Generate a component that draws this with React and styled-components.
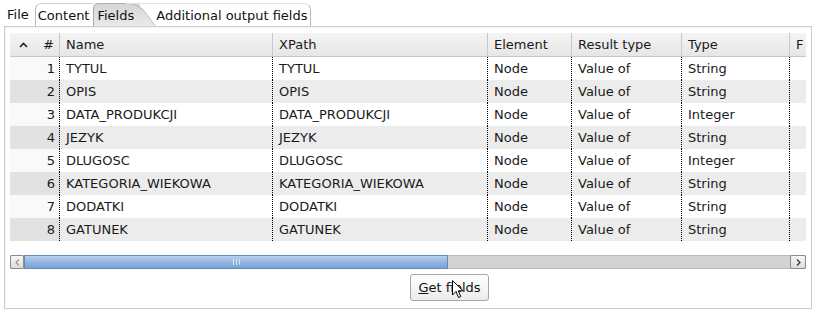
import styled, { createGlobalStyle, css } from "styled-components";

const GlobalStyle = createGlobalStyle`
  body {
    margin: 0;
    background: #ffffff;
    font-family: "DejaVu Sans", "Noto Sans", sans-serif;
    font-size: 13px;
    color: #1a1a1a;
  }
`;

const Window = styled.div`
  width: 816px;
  height: 315px;
  background: #ffffff;
  overflow: hidden;
`;

const TabBar = styled.div`
  display: flex;
  align-items: flex-end;
  height: 26px;
  padding-left: 4px;
`;

const tabVariants = {
  plain: css`
    padding: 0 6px 0 3px;
  `,
  normal: css`
    border-left: 1px solid #b9b9b9;
    border-top: 1px solid #cfcfcf;
    border-radius: 6px 0 0 0;
    padding: 0 4px 0 2px;
  `,
  active: css`
    border-left: 1px solid #a9a9a9;
    border-top: 1px solid #b0b0b0;
    border-radius: 5px 0 0 0;
    padding: 0 6px 0 3px;
    background: linear-gradient(#d6d6d6, #e9e9e9);
    &::after {
      content: "";
      position: absolute;
      top: -1px;
      right: -16px;
      width: 20px;
      height: 22px;
      background: linear-gradient(#d6d6d6, #e9e9e9);
      border-top: 1px solid #b0b0b0;
      border-right: 1px solid #a9a9a9;
      border-radius: 0 10px 0 0;
      transform: skewX(36deg);
      transform-origin: bottom left;
    }
  `,
  last: css`
    border-right: 1px solid #b9b9b9;
    border-top: 1px solid #e3e3e3;
    border-radius: 0 7px 0 0;
    padding: 0 3px 0 30px;
    margin-left: -14px;
  `,
};

const Tab = styled.div`
  position: relative;
  box-sizing: border-box;
  height: 23px;
  display: flex;
  align-items: center;
  white-space: nowrap;
  color: #111;
  ${(p) => tabVariants[p.$variant]}
`;

const TabLabel = styled.span`
  position: relative;
  z-index: 1;
`;

const Panel = styled.div`
  box-sizing: border-box;
  margin: 0 4px;
  height: 283px;
  border: 1px solid #cdcdcd;
  box-shadow: inset 1px 1px 0 #f4f4f4;
  padding: 6px 5px 0;
  display: flex;
  flex-direction: column;
`;

const TableView = styled.div`
  height: 236px;
  display: flex;
  flex-direction: column;
  background: #ffffff;
`;

const columns = "50px 213px 215px 84px 110px 108px 16px";

const HeaderRow = styled.div`
  display: grid;
  grid-template-columns: ${columns};
  height: 24px;
  background: linear-gradient(#f4f4f4, #e6e6e6);
  border-bottom: 1px solid #c6c6c6;
  box-sizing: border-box;
`;

const HeaderCell = styled.div`
  box-sizing: border-box;
  display: flex;
  align-items: center;
  justify-content: ${(p) => (p.$num ? "space-between" : "flex-start")};
  padding: ${(p) => (p.$num ? "0 5px 0 9px" : "0 0 0 6px")};
  border-right: ${(p) => (p.$last ? "none" : "1px solid #c9c9c9")};
  overflow: hidden;
  white-space: nowrap;
`;

const BodyRow = styled.div`
  display: grid;
  grid-template-columns: ${columns};
  height: 23px;
  background: ${(p) => (p.$even ? "#ececec" : "#ffffff")};
`;

const Cell = styled.div`
  box-sizing: border-box;
  display: flex;
  align-items: center;
  justify-content: ${(p) => (p.$num ? "flex-end" : "flex-start")};
  padding: ${(p) => (p.$num ? "0 4px 0 0" : "0 0 0 6px")};
  border-right: ${(p) => (p.$last ? "none" : "1px dotted #000")};
  background: ${(p) => (p.$num ? (p.$even ? "#e2e2e2" : "#f9f9f9") : "transparent")};
  white-space: nowrap;
  overflow: hidden;
`;

const Filler = styled.div`
  flex: 1;
`;

const HScroll = styled.div`
  display: flex;
  height: 14px;
  box-sizing: border-box;
  background: #d3d3d3;
  border-top: 1px solid #b9b9b9;
  border-bottom: 1px solid #b9b9b9;
`;

const ArrowButton = styled.div`
  box-sizing: border-box;
  width: ${(p) => p.$w}px;
  margin-top: -1px;
  height: 14px;
  border: 1px solid #8c8c8c;
  border-radius: 2px;
  background: linear-gradient(#f7f7f7, #dcdcdc);
  display: flex;
  align-items: center;
  justify-content: center;
  margin-left: ${(p) => (p.$right ? "auto" : "0")};
`;

const Thumb = styled.div`
  box-sizing: border-box;
  width: 424px;
  margin-top: -1px;
  height: 14px;
  border: 1px solid #6688b6;
  background: linear-gradient(#b8cfec, #8fb3e0 55%, #7aa3d6);
  display: flex;
  align-items: center;
  justify-content: center;
`;

const ButtonRow = styled.div`
  position: relative;
  padding: 5px 0 0 400px;
`;

const PushButton = styled.div`
  box-sizing: border-box;
  width: 79px;
  height: 27px;
  border: 1px solid #a6a6a6;
  border-radius: 3px;
  background: linear-gradient(#ffffff, #ececec);
  display: flex;
  align-items: center;
  justify-content: center;
  color: #111;
`;

const Mnemonic = styled.span`
  text-decoration: underline;
`;

const Cursor = styled.svg`
  position: absolute;
  left: 442px;
  top: 11px;
`;

const rows = [
  ["TYTUL", "String"],
  ["OPIS", "String"],
  ["DATA_PRODUKCJI", "Integer"],
  ["JEZYK", "String"],
  ["DLUGOSC", "Integer"],
  ["KATEGORIA_WIEKOWA", "String"],
  ["DODATKI", "String"],
  ["GATUNEK", "String"],
];

const SortArrow = () => (
  <svg width="9" height="6" viewBox="0 0 9 6">
    <path d="M1 5 L4.5 1.5 L8 5" fill="none" stroke="#222" strokeWidth="1.6" />
  </svg>
);

const Chevron = ({ dir }) => (
  <svg width="5" height="7" viewBox="0 0 5 7">
    <path
      d={dir === "left" ? "M4 0.5 L1 3.5 L4 6.5" : "M1 0.5 L4 3.5 L1 6.5"}
      fill="none"
      stroke={dir === "left" ? "#9a9a9a" : "#333"}
      strokeWidth="1.2"
    />
  </svg>
);

const Grip = () => (
  <svg width="7" height="6" viewBox="0 0 7 6">
    <path d="M0.5 0 V6 M3.5 0 V6 M6.5 0 V6" stroke="#d8e4f4" strokeWidth="1" />
  </svg>
);

export default function App() {
  return (
    <Window>
      <GlobalStyle />
      <TabBar>
        <Tab $variant="plain"><TabLabel>File</TabLabel></Tab>
        <Tab $variant="normal"><TabLabel>Content</TabLabel></Tab>
        <Tab $variant="active"><TabLabel>Fields</TabLabel></Tab>
        <Tab $variant="last"><TabLabel>Additional output fields</TabLabel></Tab>
      </TabBar>
      <Panel>
        <TableView>
          <HeaderRow>
            <HeaderCell $num>
              <SortArrow />
              <span>#</span>
            </HeaderCell>
            <HeaderCell>Name</HeaderCell>
            <HeaderCell>XPath</HeaderCell>
            <HeaderCell>Element</HeaderCell>
            <HeaderCell>Result type</HeaderCell>
            <HeaderCell>Type</HeaderCell>
            <HeaderCell $last>F</HeaderCell>
          </HeaderRow>
          {rows.map(([name, type], i) => {
            const even = i % 2 === 1;
            return (
              <BodyRow key={name} $even={even}>
                <Cell $num $even={even}>{i + 1}</Cell>
                <Cell>{name}</Cell>
                <Cell>{name}</Cell>
                <Cell>Node</Cell>
                <Cell>Value of</Cell>
                <Cell>{type}</Cell>
                <Cell $last />
              </BodyRow>
            );
          })}
          <Filler />
          <HScroll>
            <ArrowButton $w={14}>
              <Chevron dir="left" />
            </ArrowButton>
            <Thumb>
              <Grip />
            </Thumb>
            <ArrowButton $w={16} $right>
              <Chevron dir="right" />
            </ArrowButton>
          </HScroll>
        </TableView>
        <ButtonRow>
          <PushButton>
            <span>
              <Mnemonic>G</Mnemonic>et fields
            </span>
          </PushButton>
          <Cursor width="12" height="19" viewBox="0 0 12 19">
            <path
              d="M0.5 0.5 L0.5 15 L4 11.5 L6.5 17.5 L8.8 16.5 L6.3 10.8 L11 10.8 Z"
              fill="#fff"
              stroke="#000"
              strokeWidth="1"
              strokeLinejoin="round"
            />
          </Cursor>
        </ButtonRow>
      </Panel>
    </Window>
  );
}
